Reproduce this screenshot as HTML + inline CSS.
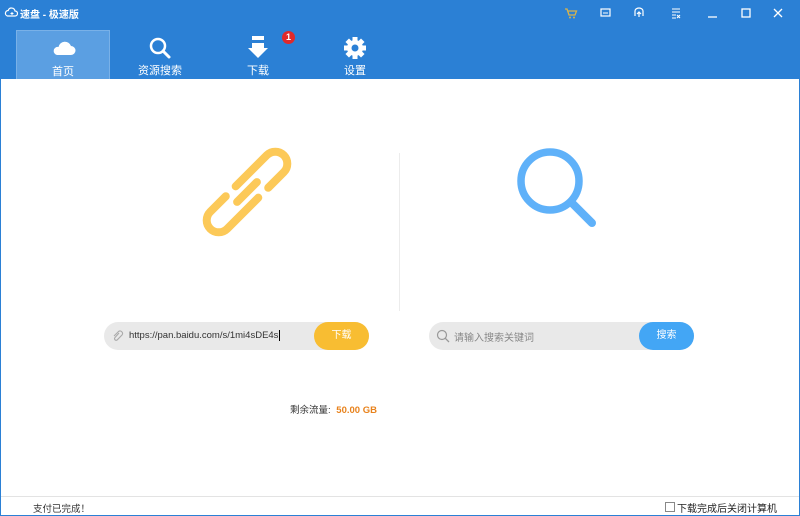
<!DOCTYPE html>
<html><head><meta charset="utf-8"><style>
*{margin:0;padding:0;box-sizing:border-box}
body{width:800px;height:516px;overflow:hidden;background:#fff;font-family:"Liberation Sans","Noto Sans CJK SC",sans-serif;position:relative}
.hdr{position:absolute;left:0;top:0;width:800px;height:79px;background:#2b80d5}
.frame{position:absolute;left:0;top:79px;width:800px;height:437px;border:1px solid #2b80d5;border-top:none}
.t{position:absolute;color:#fff;font-size:11px}
.tab{position:absolute;top:30px;height:49px;width:94px;text-align:center;color:#fff;font-size:11px}
.tab span{position:absolute;left:0;right:0;top:32px}
.pill{position:absolute;top:322px;height:28px;width:265px;border-radius:14px;background:#e9e9e9}
.btn{position:absolute;right:0;top:0;height:28px;width:55px;border-radius:14px;color:#fff;font-size:10px;text-align:center;line-height:28px}
</style></head><body>
<div class="hdr"></div>
<div class="frame"></div>
<svg style="position:absolute;left:4px;top:6px" width="14" height="12" viewBox="0 0 14 12"><path d="M3.5 10H11a2.5 2.5 0 0 0 0-5 3.5 3.5 0 0 0-6.8-.5A2.8 2.8 0 0 0 3.5 10z" fill="none" stroke="#fff" stroke-width="1.2"/><path d="M8 6v3M6.5 7.5h3" stroke="#fff" stroke-width="1"/></svg>
<div class="t" style="left:20px;top:6px;font-size:10px;font-weight:bold">速盘 - 极速版</div>
<svg style="position:absolute;left:560px;top:4px" width="240" height="18" viewBox="0 0 240 18">
<path d="M5 5h2l2 6h6l1.5-4H8" fill="none" stroke="#d9b34a" stroke-width="1.3"/><circle cx="10" cy="13.5" r="1" fill="#d9b34a"/><circle cx="14" cy="13.5" r="1" fill="#d9b34a"/>
<rect x="41" y="5" width="9" height="7" fill="none" stroke="#fff" stroke-width="1.2"/><path d="M43 9h5" stroke="#fff"/>
<path d="M75 12v-5a4 3 0 0 1 8 0v5M79 8v5M77 10l2-2 2 2" fill="none" stroke="#fff" stroke-width="1.2"/>
<path d="M112 5h8M112 8h8M112 11h4M112 14h4M117 11l3 3M120 11l-3 3" stroke="#fff" stroke-width="1.1"/>
<path d="M148 13h9" stroke="#fff" stroke-width="1.3"/>
<rect x="182" y="5" width="8" height="8" fill="none" stroke="#fff" stroke-width="1.3"/>
<path d="M214 5l8 8M222 5l-8 8" stroke="#fff" stroke-width="1.3"/>
</svg>
<div class="tab" style="left:16px;background:#5b9fe2;border:1px solid #79b1e8;border-bottom:none">
<svg style="position:absolute;left:35px;top:8px" width="24" height="18" viewBox="0 0 24 18"><path d="M5 16h14a4.5 4.5 0 0 0 0-9 6.5 6.5 0 0 0-12.5 1A4 4 0 0 0 5 16z" fill="#fff"/></svg>
<span>首页</span></div>
<div class="tab" style="left:113px">
<svg style="position:absolute;left:35px;top:6px" width="24" height="24" viewBox="0 0 24 24"><circle cx="10" cy="10" r="7" fill="none" stroke="#fff" stroke-width="2.5"/><path d="M15 15l6 6" stroke="#fff" stroke-width="3" stroke-linecap="round"/></svg>
<span>资源搜索</span></div>
<div class="tab" style="left:211px">
<svg style="position:absolute;left:36px;top:6px" width="22" height="24" viewBox="0 0 22 24"><rect x="5" y="0" width="12" height="4" fill="#fff"/><path d="M5 7h12v5h4L11 22 1 12h4z" fill="#fff"/></svg>
<span>下载</span></div>
<div style="position:absolute;left:282px;top:31px;width:13px;height:13px;border-radius:50%;background:#e0292b;color:#fff;font-size:9px;text-align:center;line-height:13px;font-weight:bold">1</div>
<div class="tab" style="left:308px">
<svg style="position:absolute;left:35px;top:6px" width="24" height="24" viewBox="0 0 24 24"><g transform="translate(12 12)" fill="#fff"><rect x="-2.5" y="-11" width="5" height="22"/><rect x="-2.5" y="-11" width="5" height="22" transform="rotate(45)"/><rect x="-2.5" y="-11" width="5" height="22" transform="rotate(90)"/><rect x="-2.5" y="-11" width="5" height="22" transform="rotate(135)"/><circle r="8"/></g><circle cx="12" cy="12" r="3.5" fill="#2b80d5"/></svg>
<span>设置</span></div>
<svg style="position:absolute;left:197px;top:142px" width="100" height="100" viewBox="0 0 100 100">
<g transform="translate(50 50) rotate(-45)" fill="none" stroke="#fcc958" stroke-width="8" stroke-linecap="round">
<path d="M-4 -12H40a12 12 0 0 1 0 24H18"/>
<path d="M4 12H-40a12 12 0 0 1 0-24H-18"/>
<path d="M-14 0H14"/>
</g></svg>
<div style="position:absolute;left:399px;top:153px;width:1px;height:158px;background:#ececec"></div>
<svg style="position:absolute;left:510px;top:145px" width="90" height="85" viewBox="0 0 90 85"><circle cx="40" cy="36" r="29" fill="none" stroke="#5fb1f9" stroke-width="7.5"/><path d="M62 58l20 20" stroke="#5fb1f9" stroke-width="8" stroke-linecap="round"/></svg>
<div class="pill" style="left:104px">
<svg style="position:absolute;left:8px;top:8px" width="12" height="12" viewBox="0 0 12 12"><path d="M7 3L3 7.5a1.6 1.6 0 0 0 2.3 2.3L10 5a2.5 2.5 0 0 0-3.5-3.5L2 6" fill="none" stroke="#aaa" stroke-width="1.1"/></svg>
<div style="position:absolute;left:25px;top:8px;font-size:9.5px;color:#333">https://pan.baidu.com/s/1mi4sDE4s<span style="border-left:1px solid #000;margin-left:1px"></span></div>
<div class="btn" style="background:#f8bd32">下载</div></div>
<div class="pill" style="left:429px">
<svg style="position:absolute;left:7px;top:7px" width="14" height="14" viewBox="0 0 14 14"><circle cx="6" cy="6" r="4.5" fill="none" stroke="#999" stroke-width="1.2"/><path d="M9.3 9.3L13 13" stroke="#999" stroke-width="1.3"/></svg>
<div style="position:absolute;left:25px;top:7px;font-size:10px;color:#888">请输入搜索关键词</div>
<div class="btn" style="background:#43a6f5">搜索</div></div>
<div style="position:absolute;left:290px;top:402px;font-size:9.5px;color:#333">剩余流量: <b style="color:#e8821c;margin-left:3px">50.00 GB</b></div>
<div style="position:absolute;left:1px;top:496px;width:798px;height:1px;background:#e3e3e3"></div>
<div style="position:absolute;left:33px;top:501px;font-size:9.5px;color:#333">支付已完成！</div>
<div style="position:absolute;left:665px;top:502px;width:10px;height:10px;border:1px solid #888;background:#fff"></div>
<div style="position:absolute;left:677px;top:500px;font-size:10px;color:#222">下载完成后关闭计算机</div>
</body></html>
